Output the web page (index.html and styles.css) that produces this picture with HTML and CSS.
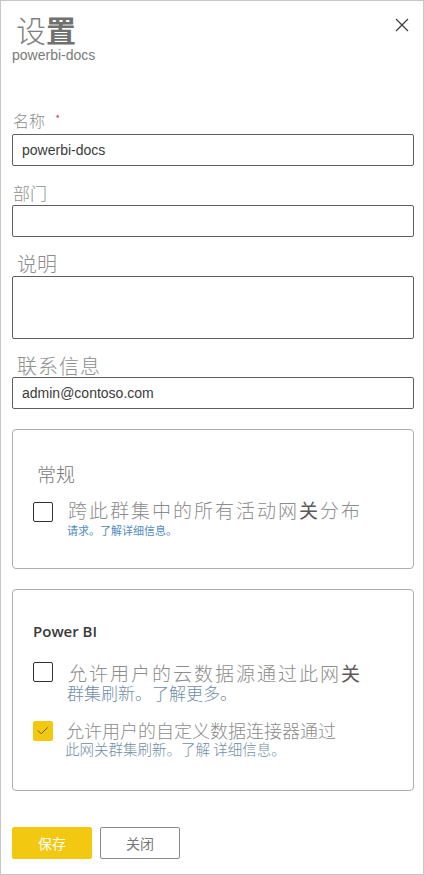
FILE: index.html
```html
<!DOCTYPE html>
<html lang="zh-CN">
<head>
<meta charset="utf-8">
<title>设置</title>
<link rel="stylesheet" href="styles.css">
</head>
<body>
<div class="panel">
  <header class="head">
    <div class="head-text">
      <h1 class="title"><span class="thin">设</span><span class="bold">置</span></h1>
      <div class="subtitle">powerbi-docs</div>
    </div>
    <button class="close" type="button" aria-label="关闭">
      <svg width="14" height="14" viewBox="0 0 14 14"><path d="M1 1 L13 13 M13 1 L1 13" stroke="#3a3a3a" stroke-width="1.2" fill="none"/></svg>
    </button>
  </header>

  <div class="field f-name">
    <div class="lbl lbl-name">名称<span class="req">*</span></div>
    <div class="input"><span class="val">powerbi-docs</span></div>
  </div>
  <div class="field f-dept">
    <div class="lbl lbl-dept">部门</div>
    <div class="input"></div>
  </div>
  <div class="field f-desc">
    <div class="lbl lbl-big">说明</div>
    <div class="input textarea"></div>
  </div>
  <div class="field f-contact">
    <div class="lbl lbl-big lbl-contact">联系信息</div>
    <div class="input"><span class="val">admin@contoso.com</span></div>
  </div>

  <section class="card card-general">
    <h2 class="card-title cjk">常规</h2>
    <div class="check-row row-a">
      <span class="box"></span>
      <div class="check-text">
        <div class="line1 wide">跨此群集中的所有活动网<span class="dark">关</span>分布</div>
        <div class="line2 tiny">请求。了解详细信息。</div>
      </div>
    </div>
  </section>

  <section class="card card-pbi">
    <h2 class="card-title latin">Power BI</h2>
    <div class="check-row row-b">
      <span class="box"></span>
      <div class="check-text">
        <div class="line1 wide b1">允许用户的云数据源通过此网<span class="dark">关</span></div>
        <div class="line2 mid">群集刷新。了解更多。</div>
      </div>
    </div>
    <div class="check-row row-c">
      <span class="box checked">
        <svg width="20" height="20" viewBox="0 0 20 20"><polyline points="5,9.5 8.3,12.8 14.8,6.3" fill="none" stroke="#6b5a10" stroke-width="1"/></svg>
      </span>
      <div class="check-text">
        <div class="line1 med">允许用户的自定义数据连接器通过</div>
        <div class="line2 small">此网关群集刷新。了解 详细信息。</div>
      </div>
    </div>
  </section>

  <div class="actions">
    <button class="btn btn-primary" type="button">保存</button>
    <button class="btn btn-secondary" type="button">关闭</button>
  </div>
</div>
</body>
</html>
```

FILE: styles.css
```css
* { box-sizing: border-box; }
html, body { margin: 0; padding: 0; background: #fff; }
body {
  font-family: "Noto Sans CJK SC", "Noto Sans", sans-serif;
}
.panel {
  width: 424px;
  height: 875px;
  border: 1px solid #c6c6c6;
  padding: 8px 9px 0 11px;
  display: flex;
  flex-direction: column;
}
.head {
  display: flex;
  justify-content: space-between;
  align-items: flex-start;
}
.title {
  margin: 2px 0 0 4px;
  font-weight: 400;
  font-size: 30px;
  line-height: 36px;
  color: #6b6b6b;
  font-family: "Noto Sans CJK SC", sans-serif;
}
.title .thin { font-weight: 300; color: #808080; }
.title .bold { font-weight: 700; color: #707070; }
.subtitle {
  font-family: "Liberation Sans", Arial, sans-serif;
  font-size: 14px;
  line-height: 18px;
  margin-top: -1px;
  color: #7a7a7a;
}
.close {
  margin: 9px 5px 0 0;
  padding: 0;
  border: 0;
  background: none;
  width: 14px;
  height: 14px;
  display: flex;
}
.field { display: flex; flex-direction: column; }
.lbl {
  color: #8e8e8e;
  font-weight: 300;
}
.lbl-name { font-size: 16px; line-height: 20px; margin: 45px 0 4px 1px; }
.req { color: #c4314b; font-size: 12px; vertical-align: 3px; margin-left: 10px; }
.lbl-dept { font-size: 17px; line-height: 20px; margin: 17px 0 2px 1px; }
.lbl-big { font-size: 20px; line-height: 22px; margin: 16px 0 1px 5px; }
.lbl-contact { margin-bottom: 0; letter-spacing: 1px; }
.input {
  height: 32px;
  border: 1px solid #5f5f5f;
  border-radius: 2px;
  display: flex;
  align-items: center;
  padding-left: 9px;
}
.textarea { height: 63px; }
.val {
  font-family: "Liberation Sans", Arial, sans-serif;
  font-size: 14px;
  color: #3b3b3b;
}
.card {
  border: 1px solid #adadad;
  border-radius: 4px;
  padding-left: 20px;
}
.card-general { margin-top: 20px; padding-top: 32px; padding-bottom: 31px; }
.card-pbi { margin-top: 20px; padding-top: 31px; padding-bottom: 32px; }
.card-title { margin: 0; font-weight: 400; }
.card-title.cjk {
  font-size: 19px;
  line-height: 24px;
  font-weight: 300;
  color: #7a7a7a;
  margin-left: 4px;
}
.card-title.latin {
  font-family: "Open Sans", "Noto Sans", sans-serif;
  font-weight: 600;
  font-size: 15px;
  line-height: 20px;
  color: #3a3a3a;
}
.check-row {
  display: flex;
  align-items: flex-start;
  gap: 15px;
}
.row-a { margin-top: 13px; }
.row-b { margin-top: 22px; }
.row-c { margin-top: 17px; }
.box {
  flex: none;
  width: 20px;
  height: 20px;
  border: 1px solid #333;
  border-radius: 2px;
  display: flex;
}
.row-a .box { margin-top: 3px; }
.row-b .box { margin-top: -1px; }
.row-c .box { margin-top: 1px; }
.box.checked { background: #f2c811; border-color: #f2c811; }
.box.checked svg { margin: -1px; }
.check-text { color: #8c8c8c; font-weight: 300; }
.line1.wide { font-size: 19px; line-height: 22px; letter-spacing: 2px; }
.line1.b1 { line-height: 20px; }
.line1.med { font-size: 18px; line-height: 20px; margin-left: -2px; }
.dark { color: #5a5a5a; font-weight: 400; }
.line2 { color: #4f8cc0; }
.line2.tiny { font-size: 11px; line-height: 14px; margin: 2px 0 0 -1px; font-weight: 400; }
.line2.mid { font-size: 17px; line-height: 20px; color: #6f8ea8; margin-left: -1px; }
.line2.small { font-size: 14.5px; line-height: 18px; color: #6f8ea8; margin-left: -3px; }
.actions {
  display: flex;
  gap: 8px;
  margin-top: 36px;
}
.btn {
  width: 80px;
  height: 32px;
  border-radius: 2px;
  font-family: "Noto Sans CJK SC", sans-serif;
  font-size: 14px;
  padding: 0;
  display: flex;
  align-items: center;
  justify-content: center;
}
.btn-primary { background: #f2c811; border: 1px solid #f2c811; color: #fff; }
.btn-secondary { background: #fff; border: 1px solid #8a8a8a; color: #777; }
```
